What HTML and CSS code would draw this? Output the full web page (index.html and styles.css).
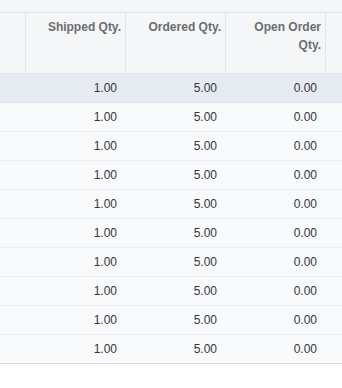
FILE: index.html
```html
<!DOCTYPE html>
<html>
<head>
<meta charset="utf-8">
<link rel="stylesheet" href="styles.css">
</head>
<body>
<div class="toolbar"></div>
<div class="grid">
  <div class="row header">
    <div class="cell"></div>
    <div class="cell">Shipped Qty.</div>
    <div class="cell">Ordered Qty.</div>
    <div class="cell">Open Order Qty.</div>
    <div class="cell"></div>
  </div>
  <div class="row selected"><div class="cell"></div><div class="cell">1.00</div><div class="cell">5.00</div><div class="cell">0.00</div><div class="cell"></div></div>
  <div class="row"><div class="cell"></div><div class="cell">1.00</div><div class="cell">5.00</div><div class="cell">0.00</div><div class="cell"></div></div>
  <div class="row"><div class="cell"></div><div class="cell">1.00</div><div class="cell">5.00</div><div class="cell">0.00</div><div class="cell"></div></div>
  <div class="row"><div class="cell"></div><div class="cell">1.00</div><div class="cell">5.00</div><div class="cell">0.00</div><div class="cell"></div></div>
  <div class="row"><div class="cell"></div><div class="cell">1.00</div><div class="cell">5.00</div><div class="cell">0.00</div><div class="cell"></div></div>
  <div class="row"><div class="cell"></div><div class="cell">1.00</div><div class="cell">5.00</div><div class="cell">0.00</div><div class="cell"></div></div>
  <div class="row"><div class="cell"></div><div class="cell">1.00</div><div class="cell">5.00</div><div class="cell">0.00</div><div class="cell"></div></div>
  <div class="row"><div class="cell"></div><div class="cell">1.00</div><div class="cell">5.00</div><div class="cell">0.00</div><div class="cell"></div></div>
  <div class="row"><div class="cell"></div><div class="cell">1.00</div><div class="cell">5.00</div><div class="cell">0.00</div><div class="cell"></div></div>
  <div class="row last"><div class="cell"></div><div class="cell">1.00</div><div class="cell">5.00</div><div class="cell">0.00</div><div class="cell"></div></div>
</div>
</body>
</html>
```

FILE: styles.css
```css
html, body {
  margin: 0;
  padding: 0;
  background: #ffffff;
  font-family: Arial, "Liberation Sans", sans-serif;
  font-size: 12px;
}
.toolbar {
  height: 12px;
  background: #f5f6f7;
}
.grid {
  width: 342px;
  overflow: hidden;
}
.row {
  display: grid;
  grid-template-columns: 26px 100px 100px 100px 16px;
  height: 29px;
  box-sizing: border-box;
  background: #f9fafc;
  border-bottom: 1px solid #eaeef3;
  color: #32363a;
}
.row .cell {
  text-align: right;
  padding: 0 9px 0 4px;
  line-height: 28px;
  box-sizing: border-box;
  white-space: nowrap;
}
.row.selected {
  background: #e6ebf2;
  border-bottom-color: #e1e6ed;
}
.row.last {
  border-bottom-color: #d9dbde;
}
.row.header {
  height: 62px;
  background: #f5f6f7;
  border-top: 1px solid #e3e4e5;
  border-bottom: 1px solid #e3e4e5;
  color: #6a6d70;
  font-weight: bold;
}
.row.header .cell {
  line-height: 18px;
  padding: 5px 4px 0 8px;
  white-space: normal;
  border-right: 1px solid #e3e4e5;
}
.row.header .cell:last-child {
  border-right: none;
}
```
